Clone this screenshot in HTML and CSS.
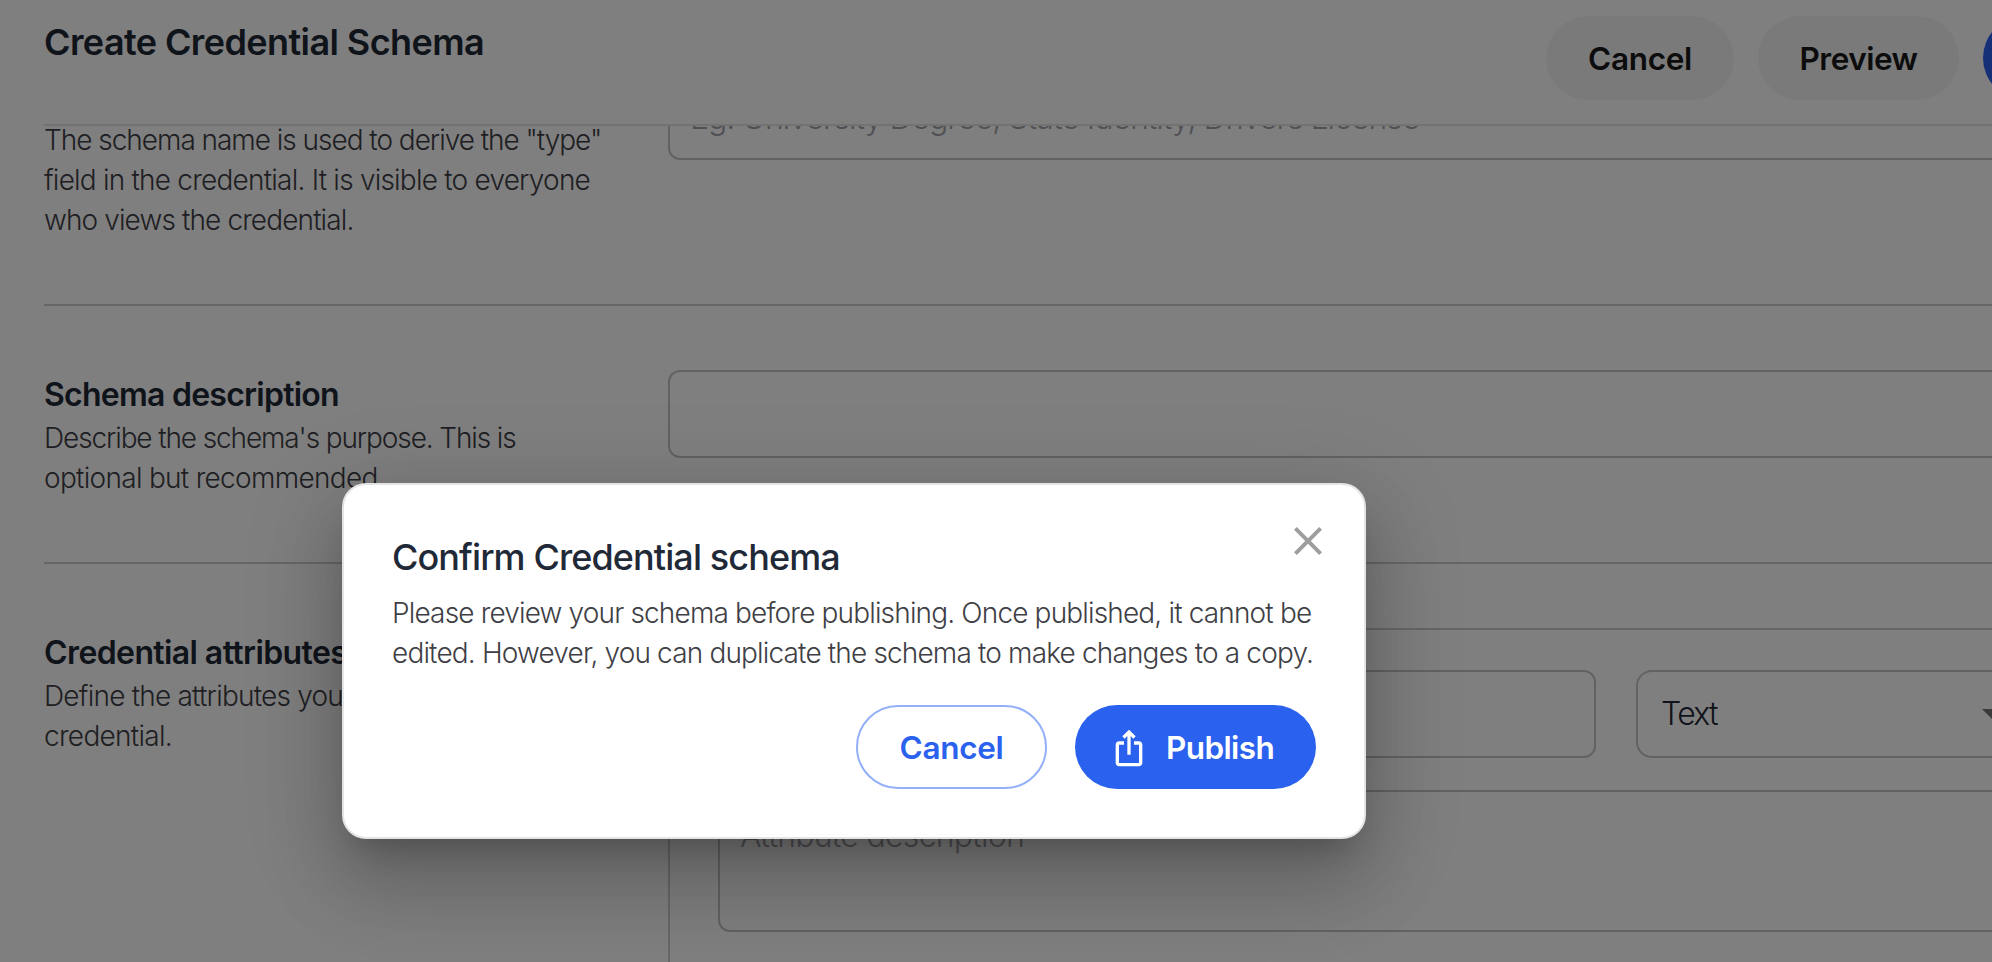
FILE: index.html
```
<!DOCTYPE html>
<html lang="en">
<head>
<meta charset="utf-8">
<title>Create Credential Schema</title>
<link rel="stylesheet" href="styles.css">
</head>
<body>
<div class="page">
  <header class="header">
    <h1 class="title">Create Credential Schema</h1>
    <div class="header-actions">
      <button class="btn btn-soft btn-cancel-top">Cancel</button>
      <button class="btn btn-soft btn-preview">Preview</button>
      <button class="btn btn-primary btn-top-publish" aria-label="Publish"></button>
    </div>
  </header>
  <main class="content">
    <section class="row row-name">
      <div class="copy">
        <div class="label"></div>
        <p class="hint"><span class="tight-4">The schema name is used to derive the "type"</span><br><span class="tight-2">field in the credential. It is visible to everyone</span><br><span class="tight-3">who views the credential.</span></p>
      </div>
      <div class="field"><span class="placeholder placeholder-name">Eg. University Degree, State Identity, Drivers License</span></div>
    </section>
    <section class="row">
      <div class="copy">
        <h2 class="label">Schema description</h2>
        <p class="hint"><span class="tight-5">Describe the schema's purpose. This is</span><br><span class="tight-1">optional but recommended</span></p>
      </div>
      <div class="field"></div>
    </section>
    <section class="row row-last">
      <div class="copy">
        <h2 class="label label-attributes">Credential attributes</h2>
        <p class="hint"><span class="tight-2">Define the attributes you</span><br><span class="tight-1">credential.</span></p>
      </div>
      <div class="card">
        <div class="card-row">
          <div class="field field-attr"></div>
          <div class="field field-select"><span class="select-value">Text</span>
            <svg class="caret" width="10" height="10" viewBox="0 0 10 10"><path d="M0 0h20L10 10z"/></svg>
          </div>
        </div>
        <div class="field field-area"><span class="placeholder placeholder-area">Attribute description</span></div>
      </div>
    </section>
  </main>
</div>
<div class="overlay">
  <div class="dialog" role="dialog">
    <svg class="close" width="48" height="48" viewBox="0 0 24 24"><path d="M19 6.410L17.590 5 12 10.590 6.410 5 5 6.410 10.590 12 5 17.590 6.410 19 12 13.410 17.590 19 19 17.590 13.410 12z"/></svg>
    <h2 class="dialog-title">Confirm Credential schema</h2>
    <p class="dialog-text">Please review your schema before publishing. Once published, it cannot be<br>edited. However, you can duplicate the schema to make changes to a copy.</p>
    <div class="dialog-actions">
      <button class="btn btn-outline">Cancel</button>
      <button class="btn btn-primary btn-publish">
        <svg class="share" width="40" height="40" viewBox="0 0 24 24"><path d="M16 5l-1.420 1.420-1.590-1.590V16h-1.980V4.830L9.420 6.420 8 5l4-4 4 4zm4 5v11c0 1.100-.9 2-2 2H6c-1.110 0-2-.9-2-2V10c0-1.110.89-2 2-2h3v2H6v11h12V10h-3V8h3c1.100 0 2 .89 2 2z"/></svg>
        <span>Publish</span>
      </button>
    </div>
  </div>
</div>
</body>
</html>
```
FILE: styles.css
```
* { box-sizing: border-box; }
body {
  margin: 0;
  height: 962px;
  overflow: hidden;
  background: #fff;
  font-family: Inter, "Liberation Sans", sans-serif;
  color: #1f2937;
}
h1, h2, p { margin: 0; font-weight: inherit; white-space: nowrap; }
.page {
  width: 100%;
  height: 962px;
  padding-left: 44px;
  display: flex;
  flex-direction: column;
  overflow: hidden;
}
.header {
  flex: none;
  height: 126px;
  border-bottom: 2px solid #e5e5e5;
  display: flex;
}
.title {
  flex: none;
  width: 1502px;
  padding-top: 20px;
  font-size: 36px;
  line-height: 44px;
  font-weight: 600;
  letter-spacing: -0.59px;
}
.header-actions { display: flex; gap: 24px; padding-top: 16px; }
.btn {
  flex: none;
  height: 84px;
  padding: 1px 0 0;
  border: 0;
  border-radius: 42px;
  display: flex;
  align-items: center;
  justify-content: center;
  font: 600 31.5px/40px Inter, "Liberation Sans", sans-serif;
  letter-spacing: -0.3px;
  white-space: nowrap;
}
.btn-soft { background: #f4f4f4; color: #18181b; }
.btn-cancel-top { width: 188px; }
.btn-preview { width: 201px; letter-spacing: -0.5px; }
.btn-primary { background: #2a61ee; color: #fff; }
.btn-top-publish { width: 240px; }
.content { flex: 1; min-height: 0; overflow: hidden; }
.row {
  display: grid;
  grid-template-columns: 624px 1fr;
  padding: 64px 0;
  border-bottom: 2px solid #cfcfcf;
}
.row-name { margin-top: -54px; padding-top: 0; }
.row-last { border-bottom: 0; }
.copy { padding-top: 3px; }
.label {
  height: 44px;
  margin-bottom: 1px;
  font-size: 32px;
  line-height: 44px;
  font-weight: 600;
  letter-spacing: -0.75px;
}
.label-attributes { letter-spacing: -0.6px; }
.hint { font-size: 28px; line-height: 40px; font-weight: 300; color: #3f3f46; }
.tight-1 { letter-spacing: -0.7px; }
.tight-2 { letter-spacing: -0.78px; }
.tight-3 { letter-spacing: -0.88px; }
.tight-4 { letter-spacing: -1.03px; }
.tight-5 { letter-spacing: -1.12px; }
/* Fields run on beyond the right edge of the viewport. */
.field {
  height: 88px;
  border: 2px solid #c4c4c4;
  border-right: 0;
  border-radius: 12px 0 0 12px;
  padding: 22px 20px;
  font-size: 32px;
  line-height: 44px;
  font-weight: 300;
  white-space: nowrap;
}
.placeholder { color: #a1a1a8; }
.placeholder-name { letter-spacing: -1px; }
.placeholder-area { letter-spacing: -0.72px; }
.card {
  height: 500px;
  border: 2px solid #cfcfcf;
  border-right: 0;
  border-radius: 12px 0 0 12px;
  padding: 40px 0 0 48px;
}
.card-row { display: flex; gap: 40px; margin-bottom: 32px; }
.field-attr { width: 878px; border-right: 2px solid #c4c4c4; border-radius: 12px; }
.field-select {
  flex: 1;
  border-radius: 16px 0 0 16px;
  display: flex;
  align-items: center;
  justify-content: space-between;
  padding: 0 0 0 23px;
}
.select-value { letter-spacing: -1.7px; }
.caret { flex: none; fill: #757575; }
.field-area { height: 142px; }
.overlay {
  position: absolute;
  inset: 0;
  background: rgba(0, 0, 0, 0.5);
  overflow: hidden;
}
.dialog {
  position: absolute;
  left: 342px;
  top: 483px;
  width: 1024px;
  height: 356px;
  padding: 50px 48px 48px;
  background: #fff;
  border: 2px solid #e4e4e4;
  border-radius: 24px;
  box-shadow: 0 22px 30px -14px rgba(0,0,0,.2), 0 48px 76px 6px rgba(0,0,0,.14), 0 18px 92px 16px rgba(0,0,0,.12);
}
.close {
  position: absolute;
  right: 32px;
  top: 32px;
  fill: #9e9e9e;
}
.dialog-title { font-size: 36px; line-height: 44px; font-weight: 450; letter-spacing: -0.9px; }
.dialog-text { font-size: 28px; line-height: 40px; font-weight: 300; color: #3f3f46; margin-top: 14px; letter-spacing: -0.84px; }
.dialog-actions { display: flex; justify-content: flex-end; gap: 28px; margin-top: 32px; }
.btn-outline { width: 191px; border: 2px solid #93b0f8; background: #fff; color: #2a61ee; }
.btn-publish { width: 241px; padding-left: 34px; justify-content: flex-start; gap: 17px; letter-spacing: -0.6px; }
.share { fill: #fff; }
```
